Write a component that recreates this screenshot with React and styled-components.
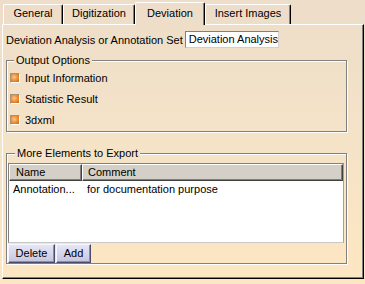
import React from 'react';
import styled, { createGlobalStyle } from 'styled-components';

const BG = 'linear-gradient(to bottom, #EDDDC9 0%, #F4E3C8 45%, #FDE6C2 100%) fixed';

const Global = createGlobalStyle`
  html, body { margin: 0; padding: 0; }
  html { background: ${BG}; }
  body {
    width: 365px;
    height: 284px;
    overflow: hidden;
    font-family: "Liberation Sans", Arial, sans-serif;
    font-size: 11px;
    color: #000;
  }
`;

const Window = styled.div`
  width: 365px;
  height: 284px;
  box-sizing: border-box;
  padding-left: 2px;
  display: flex;
  flex-direction: column;
`;

const TabBar = styled.div`
  display: flex;
  align-items: flex-end;
  height: 24px;
  padding-left: 1px;
  position: relative;
  z-index: 1;
`;

const Tab = styled.div`
  box-sizing: border-box;
  width: ${p => p.$w}px;
  height: ${p => (p.$active ? 23 : 20)}px;
  margin-bottom: ${p => (p.$active ? -1 : 0)}px;
  padding-top: ${p => (p.$active ? 4 : 2)}px;
  border-top: 1px solid #fff;
  border-left: 1px solid #fff;
  border-right: 1px solid #000;
  box-shadow: inset -1px 0 0 #808080;
  border-top-left-radius: 2px;
  border-top-right-radius: 2px;
  background: ${p => (p.$active ? BG : 'transparent')};
  text-align: center;
  line-height: 13px;
  white-space: nowrap;
`;

const Panel = styled.div`
  box-sizing: border-box;
  width: 362px;
  height: 255px;
  border-top: 1px solid #fff;
  border-left: 1px solid #fff;
  border-right: 1px solid #000;
  border-bottom: 1px solid #000;
  box-shadow: inset -1px -1px 0 #808080;
  padding: 6px 0 0 3px;
  display: flex;
  flex-direction: column;
`;

const LabelRow = styled.div`
  display: flex;
  align-items: center;
  height: 17px;
  gap: 2px;
  white-space: nowrap;
`;

const TextBox = styled.div`
  box-sizing: border-box;
  width: 94px;
  height: 17px;
  background: #fff;
  border: 1px solid;
  border-color: #808080 #d4d0c8 #d4d0c8 #808080;
  padding-left: 3px;
  line-height: 15px;
  white-space: nowrap;
  overflow: hidden;
`;

const Group = styled.fieldset`
  box-sizing: border-box;
  width: 341px;
  min-width: 0;
  margin: ${p => p.$mt}px 0 0 0;
  padding: ${p => p.$pad};
  border: 1px solid #808080;
  box-shadow: 1px 1px 0 #fff, inset 1px 1px 0 #fff;
`;

const Legend = styled.legend`
  padding: 0 2px;
  margin-left: 7px;
  line-height: 13px;
  background: ${BG};
  white-space: nowrap;
`;

const CheckRow = styled.div`
  display: flex;
  align-items: center;
  height: 21px;
  padding-left: 3px;
  gap: 5px;
`;

const Check = styled.span`
  box-sizing: border-box;
  width: 10px;
  height: 10px;
  border: 1px solid;
  border-color: #b09070 #fff #fff #b09070;
  background: radial-gradient(circle at 40% 40%, #fcc88a 0%, #ee9440 45%, #c8620e 100%);
`;

const List = styled.div`
  box-sizing: border-box;
  width: 336px;
  height: 80px;
  background: #fff;
  border: 1px solid;
  border-color: #808080 #a0a0a0 #c8c8c8 #808080;
`;

const Columns = styled.div`
  display: grid;
  grid-template-columns: 73px 1fr;
`;

const HeadCell = styled.div`
  box-sizing: border-box;
  height: 17px;
  background: #d4d0c8;
  border-top: 1px solid #fff;
  border-left: 1px solid #fff;
  border-right: 1px solid #404040;
  border-bottom: 1px solid #404040;
  box-shadow: inset -1px -1px 0 #808080;
  padding-left: ${p => p.$pl}px;
  line-height: 15px;
`;

const Cell = styled.div`
  height: 16px;
  line-height: 16px;
  padding-left: ${p => p.$pl}px;
  white-space: nowrap;
  overflow: hidden;
`;

const ButtonRow = styled.div`
  display: flex;
  gap: 1px;
  margin-top: 1px;
`;

const Button = styled.div`
  box-sizing: border-box;
  width: ${p => p.$w}px;
  height: 19px;
  background: linear-gradient(to bottom, #e6e6f6 0%, #d2d2ea 60%, #c4c4de 100%);
  border-top: 1px solid #f6f6ff;
  border-left: 1px solid #f6f6ff;
  border-right: 1px solid #4c4c66;
  border-bottom: 1px solid #4c4c66;
  box-shadow: inset -1px -1px 0 #8c8cac;
  text-align: center;
  line-height: 16px;
`;

const tabs = [
  { label: 'General', w: 60 },
  { label: 'Digitization', w: 72 },
  { label: 'Deviation', w: 70, active: true },
  { label: 'Insert Images', w: 86 },
];

const options = ['Input Information', 'Statistic Result', '3dxml'];

export default function App() {
  return (
    <>
      <Global />
      <Window>
        <TabBar>
          {tabs.map(t => (
            <Tab key={t.label} $w={t.w} $active={t.active}>{t.label}</Tab>
          ))}
        </TabBar>
        <Panel>
          <LabelRow>
            <span>Deviation Analysis or Annotation Set</span>
            <TextBox>Deviation Analysis</TextBox>
          </LabelRow>
          <Group $mt={6} $pad="0 0 1px 0">
            <Legend>Output Options</Legend>
            {options.map(o => (
              <CheckRow key={o}>
                <Check />
                <span>{o}</span>
              </CheckRow>
            ))}
          </Group>
          <Group $mt={15} $pad="3px 1px 0 1px">
            <Legend>More Elements to Export</Legend>
            <List>
              <Columns>
                <HeadCell $pl={6}>Name</HeadCell>
                <HeadCell $pl={5}>Comment</HeadCell>
              </Columns>
              <Columns>
                <Cell $pl={4}>Annotation...</Cell>
                <Cell $pl={5}>for documentation purpose</Cell>
              </Columns>
            </List>
            <ButtonRow>
              <Button $w={47}>Delete</Button>
              <Button $w={35}>Add</Button>
            </ButtonRow>
          </Group>
        </Panel>
      </Window>
    </>
  );
}
